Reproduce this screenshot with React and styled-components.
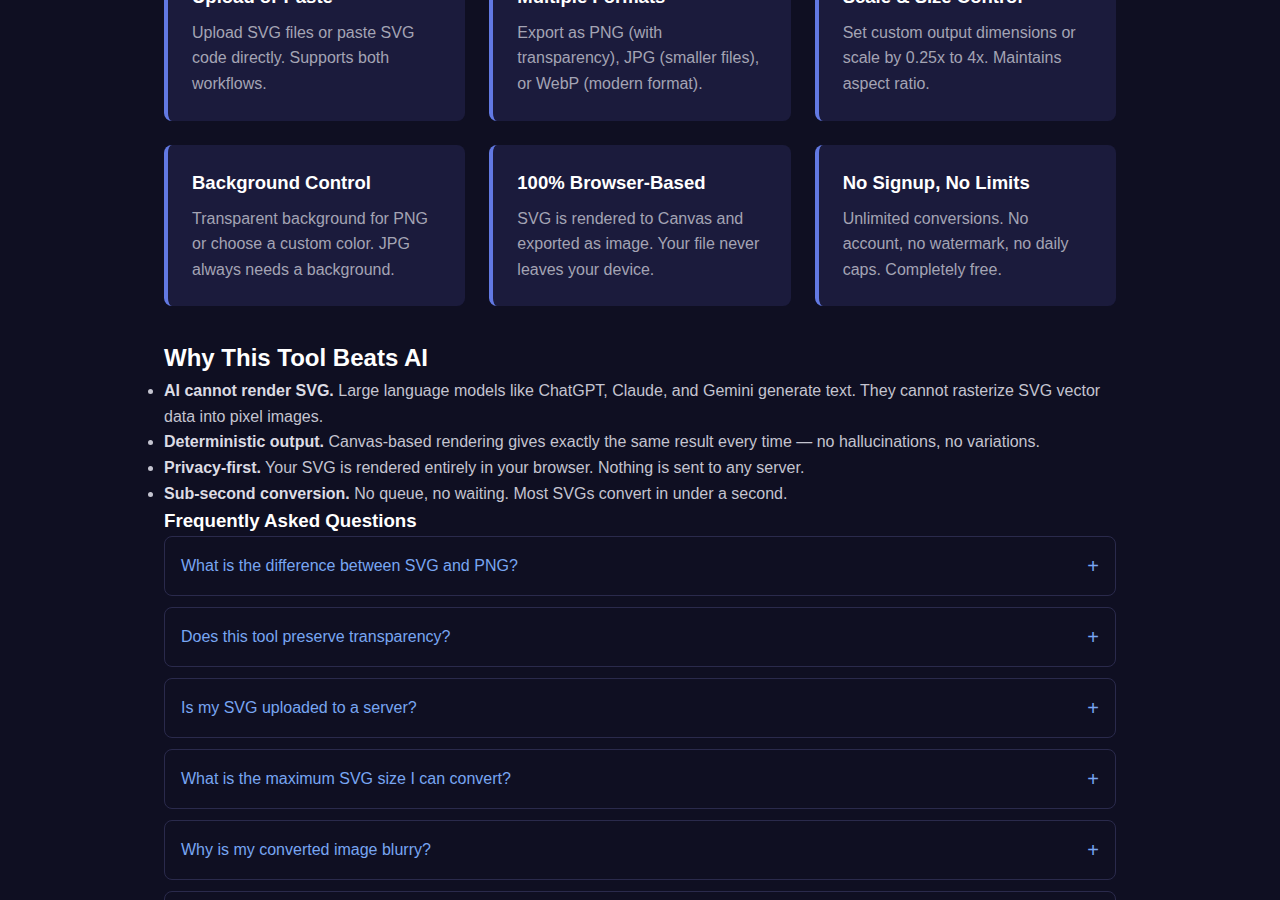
import React from "react";
import styled, { createGlobalStyle } from "styled-components";

const GlobalStyle = createGlobalStyle`
  html, body {
    margin: 0;
    padding: 0;
    background: #0f0f22;
  }
  body {
    font-family: "Liberation Sans", Arial, sans-serif;
    color: #c4c4d0;
    line-height: 1.6;
    overflow: hidden;
  }
`;

const Page = styled.main`
  width: 952px;
  margin: 0 auto;
  /* page is shown scrolled down past the converter */
  margin-top: -41px;
`;

const FeatureGrid = styled.div`
  display: grid;
  grid-template-columns: repeat(3, 1fr);
  gap: 24px;
`;

const FeatureCard = styled.div`
  background: #1b1b3c;
  border-left: 4px solid #6279e3;
  border-radius: 8px;
  padding: 25px 24px 24px;
`;

const FeatureTitle = styled.h3`
  margin: 0 0 10px;
  font-size: 18.5px;
  line-height: 1.4;
  font-weight: 700;
  color: #ffffff;
`;

const FeatureText = styled.p`
  margin: 0;
  font-size: 16px;
  line-height: 1.6;
  color: #a4a4b4;
`;

const SectionTitle = styled.h2`
  margin: 38px 0 5px;
  font-size: 24px;
  line-height: 1.2;
  font-weight: 700;
  color: #ffffff;
`;

const ReasonList = styled.ul`
  margin: 0;
  padding: 0;
  font-size: 16px;
  line-height: 1.6;
  color: #c4c4d0;
`;

const Reason = styled.li`
  strong {
    color: #dcdce4;
  }
`;

const FaqTitle = styled.h3`
  margin: 0;
  font-size: 18.7px;
  line-height: 1.6;
  font-weight: 700;
  color: #ffffff;
`;

const FaqItem = styled.div`
  border: 1px solid #2a2a4c;
  border-radius: 8px;
  margin-bottom: 11px;
`;

const FaqQuestion = styled.button`
  display: flex;
  justify-content: space-between;
  align-items: center;
  width: 100%;
  background: transparent;
  border: none;
  padding: 16px;
  font-family: inherit;
  font-size: 16px;
  line-height: 26px;
  color: #78a6f2;
  text-align: left;
  cursor: pointer;
`;

const PlusSign = styled.span`
  font-size: 20px;
  line-height: 1;
  color: #78a6f2;
`;

const features = [
  {
    title: "Upload or Paste",
    text: "Upload SVG files or paste SVG code directly. Supports both workflows."
  },
  {
    title: "Multiple Formats",
    text: "Export as PNG (with transparency), JPG (smaller files), or WebP (modern format)."
  },
  {
    title: "Scale & Size Control",
    text: "Set custom output dimensions or scale by 0.25x to 4x. Maintains aspect ratio."
  },
  {
    title: "Background Control",
    text: "Transparent background for PNG or choose a custom color. JPG always needs a background."
  },
  {
    title: "100% Browser-Based",
    text: "SVG is rendered to Canvas and exported as image. Your file never leaves your device."
  },
  {
    title: "No Signup, No Limits",
    text: "Unlimited conversions. No account, no watermark, no daily caps. Completely free."
  }
];

const reasons = [
  {
    lead: "AI cannot render SVG.",
    text: " Large language models like ChatGPT, Claude, and Gemini generate text. They cannot rasterize SVG vector data into pixel images."
  },
  {
    lead: "Deterministic output.",
    text: " Canvas-based rendering gives exactly the same result every time — no hallucinations, no variations."
  },
  {
    lead: "Privacy-first.",
    text: " Your SVG is rendered entirely in your browser. Nothing is sent to any server."
  },
  {
    lead: "Sub-second conversion.",
    text: " No queue, no waiting. Most SVGs convert in under a second."
  }
];

const questions = [
  "What is the difference between SVG and PNG?",
  "Does this tool preserve transparency?",
  "Is my SVG uploaded to a server?",
  "What is the maximum SVG size I can convert?",
  "Why is my converted image blurry?",
  "Can I convert multiple SVGs at once?"
];

export default function App() {
  return (
    <>
      <GlobalStyle />
      <Page>
        <FeatureGrid>
          {features.map(f => (
            <FeatureCard key={f.title}>
              <FeatureTitle>{f.title}</FeatureTitle>
              <FeatureText>{f.text}</FeatureText>
            </FeatureCard>
          ))}
        </FeatureGrid>

        <SectionTitle>Why This Tool Beats AI</SectionTitle>
        <ReasonList>
          {reasons.map(r => (
            <Reason key={r.lead}>
              <strong>{r.lead}</strong>
              {r.text}
            </Reason>
          ))}
        </ReasonList>

        <FaqTitle>Frequently Asked Questions</FaqTitle>
        {questions.map(q => (
          <FaqItem key={q}>
            <FaqQuestion>
              <span>{q}</span>
              <PlusSign>+</PlusSign>
            </FaqQuestion>
          </FaqItem>
        ))}
      </Page>
    </>
  );
}
